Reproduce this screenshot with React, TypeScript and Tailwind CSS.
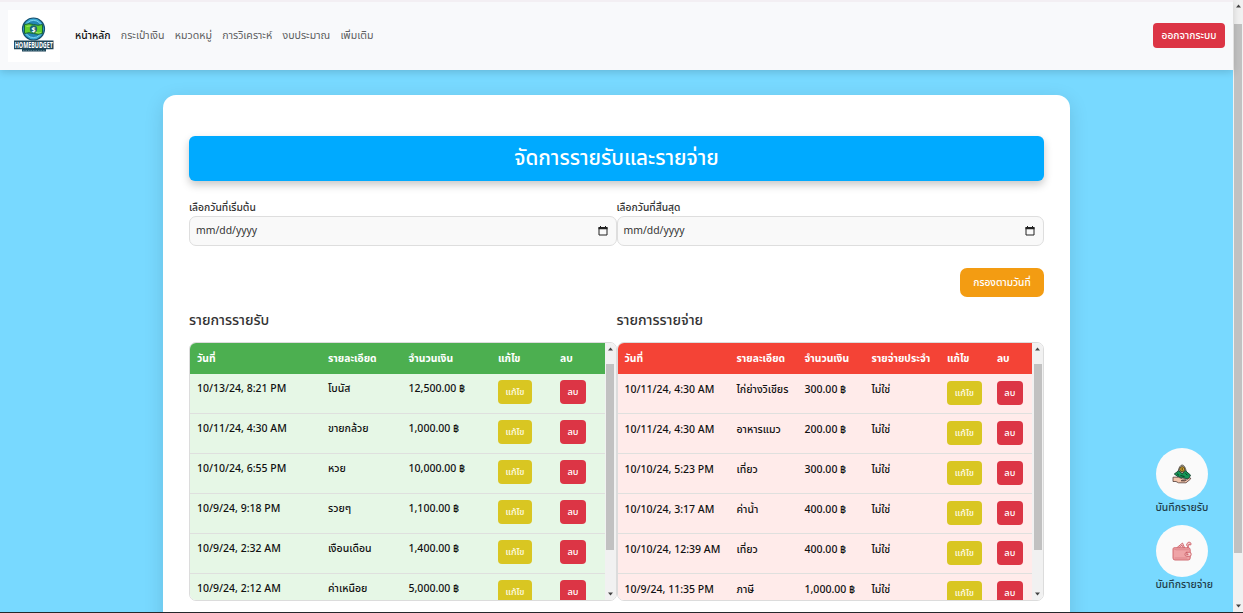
import type { ReactNode } from 'react';

function Txt({ children, className = '' }: { children: ReactNode; className?: string }) {
  return <span className={`block whitespace-nowrap ${className}`}>{children}</span>;
}

const NAV = ['หน้าหลัก', 'กระเป๋าเงิน', 'หมวดหมู่', 'การวิเคราะห์', 'งบประมาณ', 'เพิ่มเติม'];

const INCOME = [
  ['10/13/24, 8:21 PM', 'โบนัส', '12,500.00 ฿'],
  ['10/11/24, 4:30 AM', 'ขายกล้วย', '1,000.00 ฿'],
  ['10/10/24, 6:55 PM', 'หวย', '10,000.00 ฿'],
  ['10/9/24, 9:18 PM', 'รวยๆ', '1,100.00 ฿'],
  ['10/9/24, 2:32 AM', 'เงือนเดือน', '1,400.00 ฿'],
  ['10/9/24, 2:12 AM', 'ค่าเหนือย', '5,000.00 ฿'],
];

const EXPENSE = [
  ['10/11/24, 4:30 AM', 'ไก่ย่างวิเชียร', '300.00 ฿', 'ไม่ใช่'],
  ['10/11/24, 4:30 AM', 'อาหารแมว', '200.00 ฿', 'ไม่ใช่'],
  ['10/10/24, 5:23 PM', 'เที่ยว', '300.00 ฿', 'ไม่ใช่'],
  ['10/10/24, 3:17 AM', 'ค่าน้ำ', '400.00 ฿', 'ไม่ใช่'],
  ['10/10/24, 12:39 AM', 'เที่ยว', '400.00 ฿', 'ไม่ใช่'],
  ['10/9/24, 11:35 PM', 'ภาษี', '1,000.00 ฿', 'ไม่ใช่'],
];

function Scroll({ width, thumb }: { width: string; thumb: string }) {
  return (
    <div className={`flex shrink-0 flex-col items-center bg-[#f1f1f1] ${width}`}>
      <svg className="mt-[4px] h-[4px] w-[5px] shrink-0" viewBox="0 0 5 4"><path d="M0 3.5 2.5 .5 5 3.5z" fill="#444" /></svg>
      <div className={`w-[8px] shrink-0 bg-[#c1c1c1] ${thumb}`} />
      <div className="grow" />
      <svg className="mb-[4px] h-[4px] w-[5px] shrink-0" viewBox="0 0 5 4"><path d="M0 .5 2.5 3.5 5 .5z" fill="#444" /></svg>
    </div>
  );
}

function Logo() {
  return (
    <svg className="h-[52px] w-[52px] bg-white" viewBox="0 0 52 52">
      <circle cx="25.5" cy="19" r="11" fill="#39a9d6" stroke="#16506f" strokeWidth="1.2" />
      <circle cx="25.5" cy="19" r="8.6" fill="#2386b4" stroke="#8fdcf3" strokeWidth=".8" />
      <path d="M16.5 14.5q4.5-1.5 9 0t9 0v9q-4.5 1.5-9 0t-9 0z" fill="#5fce2f" stroke="#17613a" strokeWidth="1" />
      <path d="M18.5 16.5q3-1 5 0M28 22.5q3 1 5 0" fill="none" stroke="#b5ee6b" strokeWidth=".8" />
      <circle cx="25.5" cy="19" r="3.7" fill="#1b6575" />
      <text x="25.5" y="21.5" textAnchor="middle" fontSize="7" fontWeight="700" fill="#fff">$</text>
      <path d="M6 30.5h39.500v8.700H38v2.300H14v-2.300H6z" fill="#1e4558" />
      <text transform="translate(25.8 38.4) scale(1 1.7)" textAnchor="middle" fontSize="5.4" fontWeight="700" fill="#fff">HOMEBUDGET</text>
      <path d="M15 40.500h22" stroke="#7199aa" strokeWidth=".6" strokeDasharray="1.5 1" />
    </svg>
  );
}

function IncomeIcon() {
  return (
    <svg className="h-[20px] w-[20px]" viewBox="0 0 20 20">
      <path d="M6 7.500Q7.500 1 10.200 1T14.300 7.500L12.500 10H8z" fill="#b5ada0" stroke="#4c463d" strokeWidth=".8" />
      <path d="m2.300 10 4.400-3.300 3.500 3.100 3.300-3 5 4.300-2 3.900-7-1.500-3.200-.6z" fill="#159657" stroke="#153f2b" strokeWidth=".9" strokeLinejoin="round" />
      <circle cx="10.200" cy="5.200" r="2.500" fill="#d5a62c" stroke="#3c321a" strokeWidth=".8" />
      <path d="M10.200 3.900v2.600" stroke="#3c321a" strokeWidth=".9" />
      <path d="m5 9.700 2 1.700M13.500 9.300l2 2M8.500 11.500l4 1" stroke="#073e25" />
      <path d="M1 13.200h5.500l4 1.800h2.500q1.500 1.400-.5 1.700H9l4 .2 4.500-3q1.800-.2 1 1.200L14 18.800H6.500L4 17.500H1z" fill="#f3c4ab" stroke="#543e38" strokeWidth=".8" strokeLinejoin="round" />
    </svg>
  );
}

function WalletIcon() {
  return (
    <svg className="h-[20px] w-[20px]" viewBox="0 0 20 20" fill="none" stroke="#cd6068" strokeWidth=".9" strokeLinejoin="round" strokeLinecap="round">
      <path d="m4.500 7 6-5 2.200 5M7 6.500l3-2.300 1.200 2.300" fill="#f8d3d3" />
      <path d="M15.500 9V5.500q-1.500-1.500-.5-3Q17-.500 19 2.200v1.500l-1.500.3-.2-1-1 .8V9" fill="#f8d3d3" />
      <path d="M1.200 7.200Q2 6.300 4 6.800h12.500q1.700 0 1.700 2V17q0 2-2 2H3q-2 0-2-2V8z" fill="#efa4a7" />
      <path d="M1.500 7.700 4 8.800h12.500M3 17h12" stroke="#dc858a" />
      <rect x="13" y="11.300" width="6.200" height="4" rx="1.800" fill="#f8d3d3" />
      <circle cx="15" cy="13.300" r=".8" />
    </svg>
  );
}

function DateField({ label }: { label: string }) {
  return (
    <div className="w-1/2">
      <Txt className="h-[17px] text-[10.3px] font-medium leading-[17px] text-[#333]">{label}</Txt>
      <div className="flex h-[30px] items-center justify-between rounded-[7px] border border-[#dedede] bg-[#f9f9f9] pl-[6px] pr-[8px]">
        <Txt className="pb-[1px] text-[10.4px] text-[#333]">mm/dd/yyyy</Txt>
        <svg className="mb-[1px] h-[10px] w-[10px]" viewBox="0 0 10 10"><path d="M1 1.500h8v7.500H1z" fill="none" stroke="#222" /><path d="M.5 1h9v2.300h-9zM2 0h1v2H2zM7 0h1v2H7z" fill="#222" /></svg>
      </div>
    </div>
  );
}

type TableProps = { head: string[]; rows: string[][]; cols: string; headBg: string; rowBg: string; pad: string; btn: string; edit: string };

function Table({ head, rows, cols, headBg, rowBg, pad, btn, edit }: TableProps) {
  return (
    <div className="flex h-[259px] overflow-hidden rounded-[7px] border border-[#dcdcdc]">
      <div className="grow">
        <div className={`grid h-[31px] items-center pl-[7px] text-[10.3px] font-bold text-white ${cols} ${headBg}`}>
          {head.map((h) => <Txt key={h}>{h}</Txt>)}
        </div>
        {rows.map((r, i) => (
          <div key={i} className={`grid h-[40px] border-b border-[#dfe0de] pl-[7px] text-[10.5px] font-medium text-[#111] ${cols} ${rowBg}`}>
            {r.map((c, j) => <Txt key={j} className={`leading-[16px] ${pad}`}>{c}</Txt>)}
            <button className={`block h-[24px] rounded-[4px] bg-[#d9c622] text-[9.3px] font-medium text-[#fffce8] ${edit} ${btn}`}>แก้ไข</button>
            <button className={`block h-[24px] w-[26px] rounded-[4px] bg-[#dc3545] text-[9.3px] font-medium text-white ${btn}`}>ลบ</button>
          </div>
        ))}
      </div>
      <Scroll width="w-[11px]" thumb="mt-[13px] h-[186px]" />
    </div>
  );
}

function Fab({ label, children }: { label: string; children: ReactNode }) {
  return (
    <div className="h-[77px]">
      <button className="flex h-[52px] w-[52px] items-center justify-center rounded-full bg-[#fafafa]">{children}</button>
      <Txt className="text-[10.4px] font-medium leading-[15px] text-[#1f3d4a]">{label}</Txt>
    </div>
  );
}

export default function App() {
  return (
    <div className="h-[613px] w-[1243px] overflow-hidden border-b border-[#24282b] font-['Noto_Sans','Noto_Sans_Thai',sans-serif] text-[#333]">
      <div className="flex h-[612px] bg-[#78d9ff]">
        <div className="relative flex h-full w-[1233px] shrink-0 flex-col">
          <nav className="relative flex h-[70px] shrink-0 items-center border-t-2 border-[#f3eff3] bg-[#f8f9fb] pl-[8px] pr-[8px] shadow-[0_2px_8px_rgba(0,0,0,0.16)]">
            <div className="pb-px"><Logo /></div>
            <div className="ml-[15px] flex grow gap-[10.3px] text-[10.6px] text-[#5d5e60]">
              {NAV.map((n, i) => <Txt key={n} className={i === 0 ? 'text-[10.4px] font-medium text-[#111]' : ''}>{n}</Txt>)}
            </div>
            <button className="mb-px h-[25px] w-[72px] rounded-[4px] bg-[#dc3545] pt-px text-[10.2px] font-medium text-white">ออกจากระบบ</button>
          </nav>
          <main className="mx-auto mt-[25px] h-[540px] w-[907px] shrink-0 rounded-t-[13px] bg-white px-[26px] pt-[41px] shadow-[0_5px_20px_rgba(0,0,0,0.12)]">
            <h1 className="h-[45px] rounded-[6px] bg-[#00aaff] text-center text-[20.7px] font-medium leading-[43px] text-white shadow-[0_4px_9px_rgba(0,0,0,0.22)]">จัดการรายรับและรายจ่าย</h1>
            <div className="mt-[18px] flex"><DateField label="เลือกวันที่เริ่มต้น" /><DateField label="เลือกวันที่สิ้นสุด" /></div>
            <div className="mt-[22px] flex justify-end"><button className="h-[29px] w-[84px] rounded-[7px] bg-[#f39c12] text-[10.2px] font-medium text-white">กรองตามวันที่</button></div>
            <div className="mt-[13px] flex">
              <div className="w-1/2">
                <h2 className="mb-[13px] h-[19px] text-[14.2px] font-medium leading-[19px]">รายการรายรับ</h2>
                <Table head={['วันที่', 'รายละเอียด', 'จำนวนเงิน', 'แก้ไข', 'ลบ']} rows={INCOME} cols="grid-cols-[131px_80.5px_89.5px_62px_44px]" headBg="bg-[#4caf50]" rowBg="bg-[#e6f7e6]" pad="pt-[6px]" btn="mt-[6px]" edit="w-[34px]" />
              </div>
              <div className="w-1/2">
                <h2 className="mb-[13px] h-[19px] text-[14.2px] font-medium leading-[19px]">รายการรายจ่าย</h2>
                <Table head={['วันที่', 'รายละเอียด', 'จำนวนเงิน', 'รายจ่ายประจำ', 'แก้ไข', 'ลบ']} rows={EXPENSE} cols="grid-cols-[112px_68px_67px_75.4px_50px_35px]" headBg="bg-[#f44336]" rowBg="bg-[#ffebea]" pad="pt-[7px]" btn="mt-[7px]" edit="w-[35px]" />
              </div>
            </div>
          </main>
          <div className="absolute left-[1155.5px] top-[448px]">
            <Fab label="บันทึกรายรับ"><IncomeIcon /></Fab>
            <Fab label="บันทึกรายจ่าย"><WalletIcon /></Fab>
          </div>
        </div>
        <Scroll width="w-[10px]" thumb="mt-[16px] h-[529px]" />
      </div>
    </div>
  );
}
